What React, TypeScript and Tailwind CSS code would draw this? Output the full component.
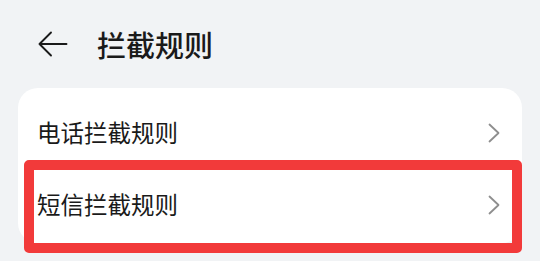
import React from 'react'

const rows = ['电话拦截规则', '短信拦截规则']

function BackArrow() {
  return (
    <svg width="30" height="26" viewBox="0 0 30 26" fill="none">
      <path d="M1.5 13H28.5M13 1.5L1.5 13L13 24.5" stroke="#1a1a1a" strokeWidth="1.9" strokeLinecap="round" strokeLinejoin="round" />
    </svg>
  )
}

function Chevron() {
  return (
    <svg width="12" height="20" viewBox="0 0 12 20" fill="none">
      <path d="M1.5 1.5L10.5 10L1.5 18.5" stroke="#8e8e8e" strokeWidth="1.8" strokeLinecap="round" strokeLinejoin="round" />
    </svg>
  )
}

export default function App() {
  return (
    <div
      className="relative w-[540px] h-[261px] overflow-hidden bg-[#f1f3f5]"
      style={{ fontFamily: '"Noto Sans CJK SC", "Noto Sans", sans-serif' }}
    >
      {/* Header */}
      <div className="flex items-center h-[88px] pl-[38px]">
        <BackArrow />
        <h1 className="ml-[29px] text-[29px] font-medium text-[#1a1a1a] leading-none">拦截规则</h1>
      </div>

      {/* Card */}
      <div className="mx-[18px] bg-white rounded-[20px] pt-[9px] pb-[2px]">
        {rows.map((label) => (
          <div key={label} className="flex items-center justify-between h-[72px] pl-[19px] pr-[22px]">
            <span className="text-[23.5px] text-[#1a1a1a] leading-none">{label}</span>
            <Chevron />
          </div>
        ))}
      </div>

      {/* Annotation highlight */}
      <div className="absolute left-[24px] top-[160px] w-[498px] h-[93px] border-[10px] border-[#f23a3a] rounded-[5px]" />
    </div>
  )
}
